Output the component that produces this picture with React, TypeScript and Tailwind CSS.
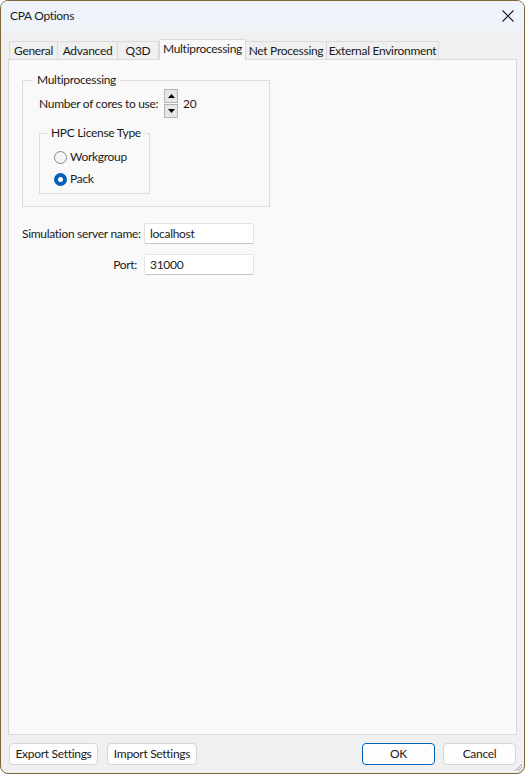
import React from 'react';

const font = { fontFamily: 'Lato, "Liberation Sans", sans-serif' };

const tabs = ['General', 'Advanced', 'Q3D', 'Multiprocessing', 'Net Processing', 'External Environment'];

function Radio({ checked, label }: { checked?: boolean; label: string }) {
  return (
    <div className="flex items-center gap-[3px] h-[22px]">
      {checked ? (
        <span className="w-[13px] h-[13px] rounded-full bg-[#005fb8] flex items-center justify-center">
          <span className="w-[5px] h-[5px] rounded-full bg-white" />
        </span>
      ) : (
        <span className="w-[13px] h-[13px] rounded-full border border-[#8a8a8a] bg-[#f5f5f5]" />
      )}
      <span>{label}</span>
    </div>
  );
}

function Spin() {
  return (
    <div className="flex flex-col gap-[1px]">
      <button className="w-[14px] h-[14px] border border-[#b4b4b4] bg-[#e6e6e6] flex items-center justify-center">
        <svg width="7" height="4" viewBox="0 0 7 4"><path d="M0 4 L3.5 0 L7 4 Z" fill="#000" /></svg>
      </button>
      <button className="w-[14px] h-[14px] border border-[#b4b4b4] bg-[#e6e6e6] flex items-center justify-center">
        <svg width="7" height="4" viewBox="0 0 7 4"><path d="M0 0 L3.5 4 L7 0 Z" fill="#000" /></svg>
      </button>
    </div>
  );
}

function Btn({ label, primary, w }: { label: string; primary?: boolean; w: string }) {
  return (
    <button
      className={
        'h-[22px] rounded-[4px] bg-[#fdfdfd] flex items-center justify-center text-[12px] text-[#1b1b1b] whitespace-nowrap ' +
        w +
        (primary ? ' border border-[#005fb8]' : ' border border-[#d5d5d5]')
      }
    >
      {label}
    </button>
  );
}

const tabW: Record<string, string> = {
  General: 'w-[49px]',
  Advanced: 'w-[60px]',
  Q3D: 'w-[41px]',
  'Net Processing': 'w-[81px]',
  'External Environment': 'w-[112px]',
};

export default function App() {
  return (
    <div
      style={font}
      className="w-[525px] h-[774px] border border-[#7b6836] rounded-[8px] overflow-hidden bg-[#f0f0f0] flex flex-col text-[12px] text-[#1b1b1b] leading-[16px] whitespace-nowrap tracking-[-0.3px]"
    >
      {/* title bar */}
      <div className="h-[30px] bg-[#eef3f9] flex items-center justify-between pl-[9px] pr-[9px] shrink-0">
        <span>CPA Options</span>
        <svg width="12" height="12" viewBox="0 0 12 12" className="mr-[1px]">
          <path d="M0.5 0.5 L11.5 11.5 M11.5 0.5 L0.5 11.5" stroke="#1b1b1b" strokeWidth="1.1" />
        </svg>
      </div>

      {/* tabs */}
      <div className="flex items-end pl-[8px] pt-[7px] h-[28px] shrink-0">
        {tabs.map(t =>
          t === 'Multiprocessing' ? (
            <div
              key={t}
              className="h-[21px] w-[87px] bg-[#f9f9f9] border border-b-0 border-[#dadada] flex items-start justify-center pt-[1px] -mb-[1px] relative z-10"
            >
              {t}
            </div>
          ) : (
            <div
              key={t}
              className={
                'h-[18px] border border-b-0 border-l-0 first:border-l border-[#dadada] bg-[#f0f0f0] flex items-center justify-center ' +
                tabW[t]
              }
            >
              {t}
            </div>
          )
        )}
      </div>

      {/* panel */}
      <div className="flex-1 mx-[7px] border border-[#dadada] bg-[#f9f9f9] pl-[13px] pt-[12px]">
        <fieldset className="w-[248px] border border-[#dcdcdc] px-[16px] pb-[12px]">
          <legend className="px-[4px] -ml-[6px]">Multiprocessing</legend>
          <div className="flex items-center mt-[1px]">
            <span className="w-[125px]">Number of cores to use:</span>
            <Spin />
            <span className="ml-[5px]">20</span>
          </div>
          <fieldset className="w-[111px] border border-[#dcdcdc] mt-[7px] pl-[14px] pb-[3px] pt-[5px]">
            <legend className="px-[4px] -ml-[7px]">HPC License Type</legend>
            <Radio label="Workgroup" />
            <Radio label="Pack" checked />
          </fieldset>
        </fieldset>

        <div className="mt-[16px] flex flex-col gap-[10px]">
          <div className="flex items-center">
            <span className="w-[115px] text-right">Simulation server name:</span>
            <input
              readOnly
              value="localhost"
              className="ml-[7px] w-[110px] h-[21px] bg-white border border-[#e3e3e3] border-b-[#c4c4c4] rounded-[2px] px-[5px] outline-none"
            />
          </div>
          <div className="flex items-center">
            <span className="w-[115px] text-right">Port:</span>
            <input
              readOnly
              value="31000"
              className="ml-[7px] w-[110px] h-[21px] bg-white border border-[#e3e3e3] border-b-[#c4c4c4] rounded-[2px] px-[5px] outline-none"
            />
          </div>
        </div>
      </div>

      {/* bottom buttons */}
      <div className="h-[38px] shrink-0 flex items-center px-[8px] relative">
        <Btn label="Export Settings" w="w-[89px]" />
        <Btn label="Import Settings" w="w-[90px] ml-[9px]" />
        <div className="flex-1" />
        <Btn label="OK" primary w="w-[73px]" />
        <Btn label="Cancel" w="w-[73px] ml-[8px]" />
        <svg width="10" height="10" viewBox="0 0 10 10" className="absolute right-[1px] bottom-[1px]">
          <path d="M9 2 L2 9 M9 5 L5 9 M9 8 L8 9" stroke="#a0a0a0" strokeWidth="1" />
        </svg>
      </div>
    </div>
  );
}
